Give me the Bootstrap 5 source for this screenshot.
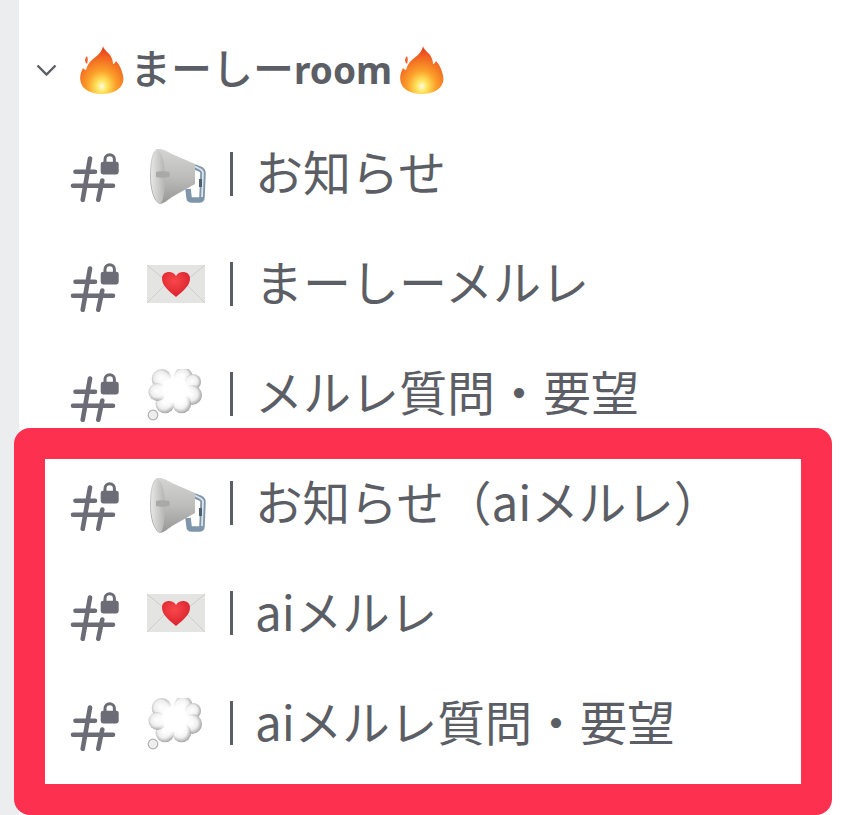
<!DOCTYPE html>
<html lang="ja">
<head>
    <meta charset="UTF-8">
    <meta name="viewport" content="width=device-width, initial-scale=1.0">
    <title>まーしーroom</title>
    <link href="https://cdn.jsdelivr.net/npm/bootstrap@5.3.0/dist/css/bootstrap.min.css" rel="stylesheet">
    <style>
        body {
            background: #fff;
            color: #5c5e66;
            font-family: "Noto Sans CJK JP", "Noto Sans", sans-serif;
            height: 815px;
            overflow: hidden;
        }
        .app-shell { height: 815px; }
        .side-strip { width: 19px; background: #ebedef; }
        .sprite { position: absolute; width: 0; height: 0; }
        .category-row { height: 50px; margin-top: 45px; padding-left: 17px; }
        .category-name { font-size: 41px; font-weight: 500; line-height: 50px; padding-bottom: 5px; margin-left: 6px; }
        .category-name b { font-size: 37px; font-weight: 700; font-family: "Noto Sans", sans-serif; }
        .chevron { width: 21px; height: 12px; margin-right: 23px; }
        .fire { width: 44px; height: 48px; flex: none; }
        .channel-list { gap: 44px; }
        .channel-row { height: 66px; padding-left: 51px; }
        .channel-name { font-size: 48px; line-height: 62px; padding-bottom: 4px; white-space: nowrap; }
        .top-channels .channel-name { padding-bottom: 8px; }
        .hash-icon { width: 50px; height: 50px; margin-top: 6px; margin-right: 27px; flex: none; }
        .emoji-box { width: 60px; height: 56px; margin-top: 6px; margin-right: 23px; flex: none; }
        .divider-bar { width: 3px; height: 44px; background: #5c5e66; margin-right: 22px; flex: none; }
        .highlight-box {
            margin: 1px 19px 0 -5px;
            height: 387px;
            border: 31px solid #fd314f;
            border-radius: 16px;
            padding-top: 11px;
        }
        .highlight-box .channel-row { padding-left: 25px; }
        .highlight-box .channel-name { font-size: 47.5px; }
        .top-channels { margin-top: 46px; }
    </style>
</head>
<body>
    <!-- shared icons -->
    <svg class="sprite" aria-hidden="true">
        <defs>
            <radialGradient id="fireFill" cx="0.5" cy="0.84" r="0.78">
                <stop offset="0" stop-color="#fffbe0"/>
                <stop offset="0.16" stop-color="#ffe45c"/>
                <stop offset="0.42" stop-color="#fba02a"/>
                <stop offset="0.75" stop-color="#f26a22"/>
                <stop offset="1" stop-color="#e9421c"/>
            </radialGradient>
            <linearGradient id="hornFill" x1="0" y1="0" x2="0" y2="1">
                <stop offset="0" stop-color="#d4d4d2"/>
                <stop offset="0.5" stop-color="#bdbdbb"/>
                <stop offset="1" stop-color="#979795"/>
            </linearGradient>
            <linearGradient id="rimFill" x1="0" y1="0" x2="1" y2="0">
                <stop offset="0" stop-color="#e6e6e4"/>
                <stop offset="1" stop-color="#b4b4b2"/>
            </linearGradient>
            <radialGradient id="heartFill" cx="0.45" cy="0.35" r="0.7">
                <stop offset="0" stop-color="#f9474a"/>
                <stop offset="1" stop-color="#d71f2b"/>
            </radialGradient>
            <radialGradient id="puffFill" cx="0.45" cy="0.45" r="0.55">
                <stop offset="0" stop-color="#ffffff"/>
                <stop offset="0.6" stop-color="#eeeeee"/>
                <stop offset="1" stop-color="#a8a8a8"/>
            </radialGradient>
            <radialGradient id="puffCore">
                <stop offset="0" stop-color="#ffffff"/>
                <stop offset="0.6" stop-color="#ffffff"/>
                <stop offset="1" stop-color="#ffffff" stop-opacity="0"/>
            </radialGradient>
        </defs>
        <symbol id="fire" viewBox="0 0 44 48">
            <path fill="url(#fireFill)" d="M23 0c1 4 5 6 7 9 2 3 3 6 3 9 1 0 2-1 3-3 3 3 5 7 6 11 1 3 2 6 1 10-2 8-11 12-21 12S3 44 1 37c-2-6 0-11 2-15 1 1 2 2 3 2 1-4 3-8 7-11 4-3 9-7 10-13z"/>
            <path fill="#f0622a" d="M7 10c1 2 1 5 0 8-1-1-2-2-2-4 0-1 1-3 2-4z"/>
        </symbol>
        <symbol id="horn" viewBox="-3 0 60 56">
            <path fill="none" stroke="#7f95a9" stroke-width="5.500" stroke-linejoin="round" d="M42 17l8 3c2 1 3 2 3 4l-1 24c0 2-1 3-3 3h-7c-2 0-3-1-3-3l-1-8"/>
            <path fill="none" stroke="#dbe5ee" stroke-width="1.800" d="M44 17l6 3c2 1 3 2 3 4l-1 24"/>
            <path fill="#4f5f6e" d="M49 30h3v8h-3z"/>
            <path fill="url(#hornFill)" d="M7 0c4-1 10 2 15 5l23 10v20L22 48c-4 3-9 7-12 7C4 53 0 41 0 27S2 2 7 0z"/>
            <path fill="url(#rimFill)" d="M7 1C3 3 1 14 1 27s3 25 9 28c3-1 5-13 5-27S12 2 7 1z"/>
            <path fill="#a9a9a7" d="M6 23c2-1 10-1 13 0 1 2 1 4 0 5-3 1-10 1-13 0z"/>
        </symbol>
        <symbol id="letter" viewBox="0 0 60 56">
            <rect x="0" y="6" width="58" height="38" fill="#e4e4e2"/>
            <path fill="none" stroke="#cdcdcb" stroke-width="1" d="M0 6l29 24L58 6M0 44l20-20M58 44L38 24"/>
            <path fill="url(#heartFill)" d="M29 38C22 32 15 27 15 19.500 15 15 18.500 13 22 13c3 0 5.500 1.500 7 4 1.500-2.500 4-4 7-4 3.500 0 7 2 7 6.500C43 27 36 32 29 38z"/>
        </symbol>
        <symbol id="cloud" viewBox="0 0 60 56">
            <circle cx="14.700" cy="10" r="10" fill="url(#puffFill)"/>
            <circle cx="36.300" cy="8" r="9.500" fill="url(#puffFill)"/>
            <circle cx="46" cy="13" r="8" fill="url(#puffFill)"/>
            <circle cx="45" cy="26" r="10" fill="url(#puffFill)"/>
            <circle cx="34.700" cy="34.700" r="9.500" fill="url(#puffFill)"/>
            <circle cx="18" cy="34.700" r="9.500" fill="url(#puffFill)"/>
            <circle cx="10.500" cy="23" r="9" fill="url(#puffFill)"/>
            <circle cx="28" cy="21" r="20" fill="url(#puffCore)"/>
            <circle cx="6" cy="46" r="4.800" fill="#eeeeee" stroke="#b0b0b0" stroke-width="1.200"/>
        </symbol>
        <symbol id="locked-hash" viewBox="0 0 50 50">
            <g fill="none" stroke="#6b6c76" stroke-width="4.600" stroke-linecap="round">
                <path d="M5.500 19.700H25M3 33.700h40M20 6.500L12.700 47.800M32.300 28.500l-4 19.300"/>
                <path stroke-width="3" d="M35 10V7.500a4.700 4.700 0 0 1 9.400 0V10"/>
            </g>
            <rect x="30.700" y="9.700" width="18" height="12.800" rx="2.400" fill="#6b6c76"/>
        </symbol>
    </svg>

    <div class="app-shell d-flex">
        <div class="side-strip flex-shrink-0"></div>
        <main class="flex-grow-1">
            <div class="category-row d-flex align-items-center">
                <svg class="chevron" viewBox="0 0 21 12"><path d="M1.500 1.500l9 9 9-9" fill="none" stroke="#5c5e66" stroke-width="2.400"/></svg>
                <svg class="fire"><use href="#fire"/></svg>
                <span class="category-name">まーしー<b>room</b></span>
                <svg class="fire ms-2"><use href="#fire"/></svg>
            </div>

            <div class="channel-list top-channels d-flex flex-column">
                <div class="channel-row d-flex align-items-center">
                    <svg class="hash-icon"><use href="#locked-hash"/></svg>
                    <svg class="emoji-box"><use href="#horn"/></svg>
                    <span class="divider-bar"></span>
                    <span class="channel-name">お知らせ</span>
                </div>
                <div class="channel-row d-flex align-items-center">
                    <svg class="hash-icon"><use href="#locked-hash"/></svg>
                    <svg class="emoji-box"><use href="#letter"/></svg>
                    <span class="divider-bar"></span>
                    <span class="channel-name">まーしーメルレ</span>
                </div>
                <div class="channel-row d-flex align-items-center">
                    <svg class="hash-icon"><use href="#locked-hash"/></svg>
                    <svg class="emoji-box"><use href="#cloud"/></svg>
                    <span class="divider-bar"></span>
                    <span class="channel-name">メルレ質問・要望</span>
                </div>
            </div>

            <div class="highlight-box channel-list d-flex flex-column">
                <div class="channel-row d-flex align-items-center">
                    <svg class="hash-icon"><use href="#locked-hash"/></svg>
                    <svg class="emoji-box"><use href="#horn"/></svg>
                    <span class="divider-bar"></span>
                    <span class="channel-name">お知らせ（aiメルレ）</span>
                </div>
                <div class="channel-row d-flex align-items-center">
                    <svg class="hash-icon"><use href="#locked-hash"/></svg>
                    <svg class="emoji-box"><use href="#letter"/></svg>
                    <span class="divider-bar"></span>
                    <span class="channel-name">aiメルレ</span>
                </div>
                <div class="channel-row d-flex align-items-center">
                    <svg class="hash-icon"><use href="#locked-hash"/></svg>
                    <svg class="emoji-box"><use href="#cloud"/></svg>
                    <span class="divider-bar"></span>
                    <span class="channel-name">aiメルレ質問・要望</span>
                </div>
            </div>
        </main>
    </div>

    <script src="https://cdn.jsdelivr.net/npm/bootstrap@5.3.0/dist/js/bootstrap.bundle.min.js"></script>
</body>
</html>
